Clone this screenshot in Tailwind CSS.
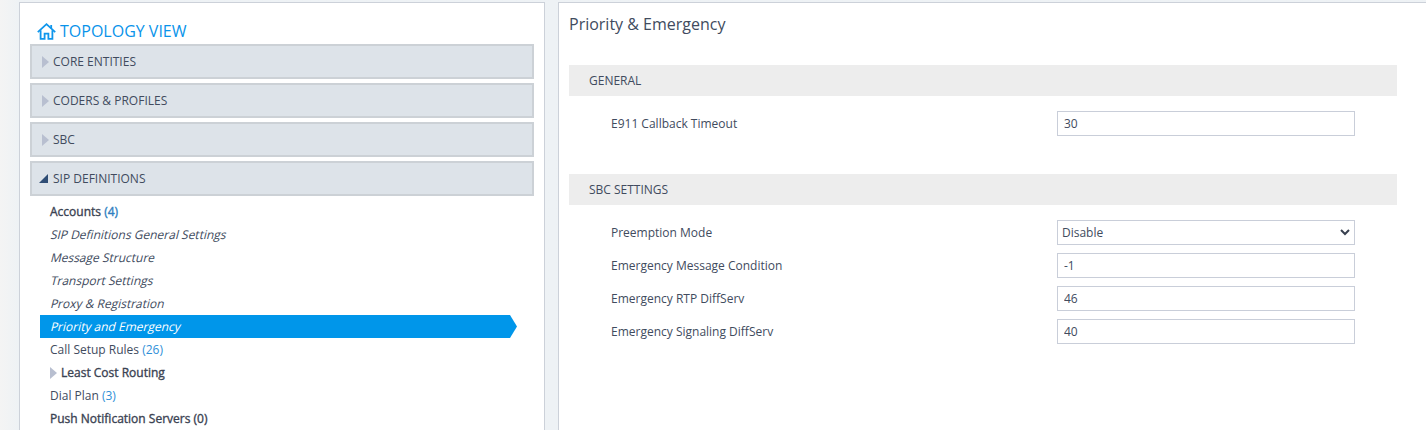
<!DOCTYPE html>
<html lang="en">
<head>
  <meta charset="UTF-8">
  <title>Priority &amp; Emergency</title>
  <script src="https://cdn.jsdelivr.net/npm/@tailwindcss/browser@4"></script>
</head>
<body class="h-[430px] overflow-hidden bg-[#eef1f4] font-['Open_Sans',sans-serif] text-[12px] text-[#414b5e]">
  <div class="flex h-[430px] items-start bg-linear-to-r from-[#f4f4f4] from-[0px] to-[#eef2f5] to-[19px] pt-[2px] pl-[19px]">

    <!-- topology tree -->
    <aside class="h-[428px] w-[526px] shrink-0 overflow-hidden border-x border-t border-[#ccd1d9] bg-white px-[10px]">
      <div class="flex h-[41px] items-end pl-[7px]">
        <svg class="mr-[4px] mb-[4px]" width="19" height="17" viewBox="0 0 19 17" fill="none" stroke="#0f96ec" stroke-width="1.8" stroke-linejoin="miter">
          <path d="M.8 9.2 9.5 1.2 18.2 9.2"/>
          <path d="M3.6 7.2V15.8H7.6V10.6H11.4V15.8H15.4V7.2"/>
          <path d="M14.2 2V5.5"/>
        </svg>
        <span class="pb-[2px] text-[16px] leading-[22px] text-[#0993ea]">TOPOLOGY VIEW</span>
      </div>

      <div class="flex flex-col gap-[4px]">
        <div class="flex h-[35px] items-center border-2 border-[#ccd1d6] bg-[#dde3e9] pl-[10px]">
          <span class="mr-[4px] h-0 w-0 border-y-[6.5px] border-l-[7px] border-y-transparent border-l-[#b8bfd0]"></span>
          <span>CORE ENTITIES</span>
        </div>
        <div class="flex h-[35px] items-center border-2 border-[#ccd1d6] bg-[#dde3e9] pl-[10px]">
          <span class="mr-[4px] h-0 w-0 border-y-[6.5px] border-l-[7px] border-y-transparent border-l-[#b8bfd0]"></span>
          <span>CODERS &amp; PROFILES</span>
        </div>
        <div class="flex h-[35px] items-center border-2 border-[#ccd1d6] bg-[#dde3e9] pl-[10px]">
          <span class="mr-[4px] h-0 w-0 border-y-[6.5px] border-l-[7px] border-y-transparent border-l-[#b8bfd0]"></span>
          <span>SBC</span>
        </div>
        <div class="flex h-[35px] items-center border-2 border-[#ccd1d6] bg-[#dde3e9] pl-[7px]">
          <span class="mr-[5px] h-0 w-0 border-b-[9px] border-l-[9px] border-b-[#2f4d75] border-l-transparent"></span>
          <span>SIP DEFINITIONS</span>
        </div>
      </div>

      <ul class="mt-[4px] text-[12px] leading-[23px]">
        <li class="h-[23px] pl-[20px] text-[#3a4252] [-webkit-text-stroke:0.35px]">Accounts <span class="text-[#2f7fc1]">(4)</span></li>
        <li class="h-[23px] pl-[21px]"><span class="inline-block -skew-x-[14deg]">SIP Definitions General Settings</span></li>
        <li class="h-[23px] pl-[21px]"><span class="inline-block -skew-x-[14deg]">Message Structure</span></li>
        <li class="h-[23px] pl-[21px]"><span class="inline-block -skew-x-[14deg]">Transport Settings</span></li>
        <li class="h-[23px] pl-[21px]"><span class="inline-block -skew-x-[14deg]">Proxy &amp; Registration</span></li>
        <li class="ml-[10px] h-[23px] w-[477px] bg-[#0096ea] pl-[11px] text-white [clip-path:polygon(0_0,470px_0,477px_50%,470px_100%,0_100%)]"><span class="inline-block -skew-x-[14deg]">Priority and Emergency</span></li>
        <li class="h-[23px] pl-[20px]">Call Setup Rules <span class="text-[#2f8fd8]">(26)</span></li>
        <li class="flex h-[23px] items-center pl-[20px] text-[#3a4252] [-webkit-text-stroke:0.35px]">
          <span class="mr-[4px] h-0 w-0 border-y-[6.5px] border-l-[7px] border-y-transparent border-l-[#b8bfd0]"></span>
          <span>Least Cost Routing</span>
        </li>
        <li class="h-[23px] pl-[20px]">Dial Plan <span class="text-[#2f8fd8]">(3)</span></li>
        <li class="h-[23px] pl-[20px] text-[#3a4252] [-webkit-text-stroke:0.35px]">Push Notification Servers (0)</li>
      </ul>
    </aside>

    <!-- settings form -->
    <main class="ml-[13px] h-[428px] flex-1 border-t border-l border-[#ccd1d9] bg-white pl-[10px]">
      <h1 class="flex h-[41px] items-center text-[16px] text-[#414b5e]">Priority &amp; Emergency</h1>

      <section class="mt-[21px] w-[828px]">
        <h2 class="flex h-[31px] items-center bg-[#ededed] pl-[20px] text-[12px]">GENERAL</h2>
        <div class="mt-[15px] flex h-[25px] items-center pl-[42px]">
          <label class="w-[446px]">E911 Callback Timeout</label>
          <input class="h-[25px] w-[298px] border border-[#c9ced9] px-[6px] text-[12px] text-[#414b5e]" value="30">
        </div>
      </section>

      <section class="mt-[38px] w-[828px]">
        <h2 class="flex h-[31px] items-center bg-[#ededed] pl-[20px] text-[12px]">SBC SETTINGS</h2>
        <div class="mt-[15px] flex flex-col gap-[8px] pl-[42px]">
          <div class="flex h-[25px] items-center">
            <label class="w-[446px]">Preemption Mode</label>
            <div class="relative h-[25px] w-[298px] border border-[#c9ced9] pl-[4px] leading-[23px]">
              Disable
              <svg class="absolute top-[8px] right-[4px]" width="10" height="7" viewBox="0 0 10 7" fill="none" stroke="#38404f" stroke-width="2"><path d="M1 1 5 5 9 1"/></svg>
            </div>
          </div>
          <div class="flex h-[25px] items-center">
            <label class="w-[446px]">Emergency Message Condition</label>
            <input class="h-[25px] w-[298px] border border-[#c9ced9] px-[6px] text-[12px] text-[#414b5e]" value="-1">
          </div>
          <div class="flex h-[25px] items-center">
            <label class="w-[446px]">Emergency RTP DiffServ</label>
            <input class="h-[25px] w-[298px] border border-[#c9ced9] px-[6px] text-[12px] text-[#414b5e]" value="46">
          </div>
          <div class="flex h-[25px] items-center">
            <label class="w-[446px]">Emergency Signaling DiffServ</label>
            <input class="h-[25px] w-[298px] border border-[#c9ced9] px-[6px] text-[12px] text-[#414b5e]" value="40">
          </div>
        </div>
      </section>
    </main>
  </div>
</body>
</html>
